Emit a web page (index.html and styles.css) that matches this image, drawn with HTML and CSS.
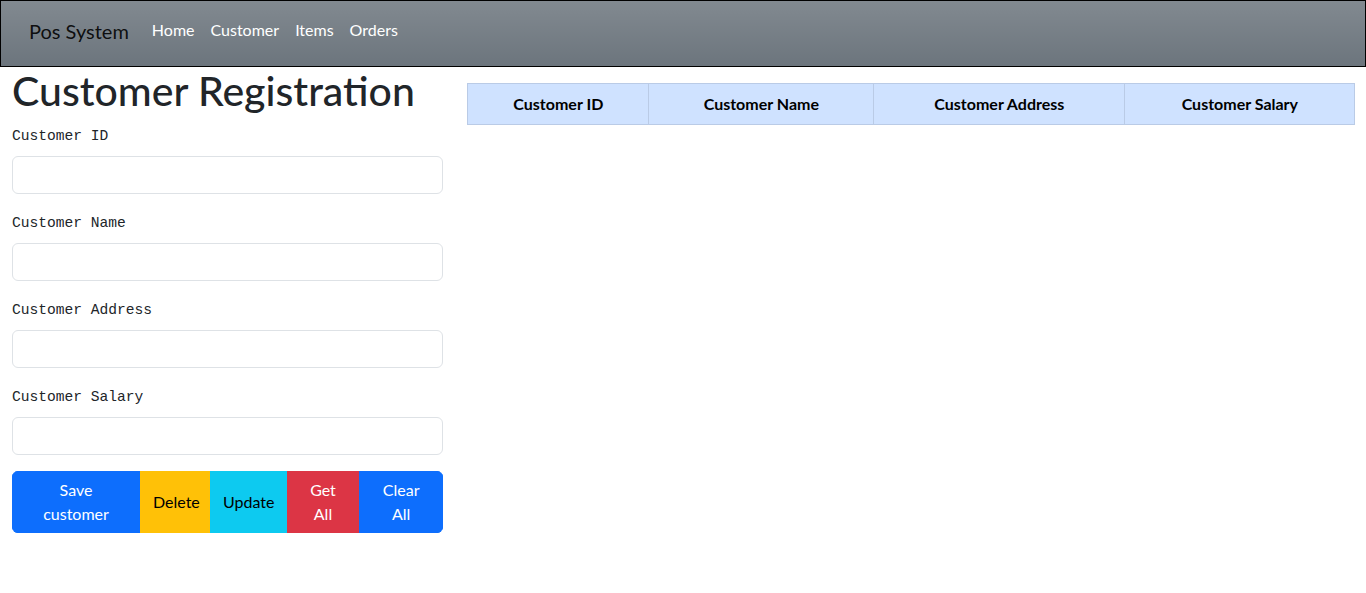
FILE: index.html
```html
<!DOCTYPE html>
<html lang="en">
<head>
<meta charset="utf-8">
<title>Pos System</title>
<link rel="stylesheet" href="styles.css">
</head>
<body>
<nav class="navbar">
  <span class="brand">Pos System</span>
  <ul class="nav-links">
    <li><a href="#">Home</a></li>
    <li><a href="#">Customer</a></li>
    <li><a href="#">Items</a></li>
    <li><a href="#">Orders</a></li>
  </ul>
</nav>
<main class="page">
  <section class="form-col">
    <h1 class="title">Customer Registration</h1>
    <div class="field">
      <label class="label" for="cid">Customer ID</label>
      <input class="input" id="cid" type="text">
    </div>
    <div class="field">
      <label class="label" for="cname">Customer Name</label>
      <input class="input" id="cname" type="text">
    </div>
    <div class="field">
      <label class="label" for="caddr">Customer Address</label>
      <input class="input" id="caddr" type="text">
    </div>
    <div class="field">
      <label class="label" for="csal">Customer Salary</label>
      <input class="input" id="csal" type="text">
    </div>
    <div class="btn-group">
      <button class="btn btn-save">Save<br>customer</button>
      <button class="btn btn-delete">Delete</button>
      <button class="btn btn-update">Update</button>
      <button class="btn btn-getall">Get<br>All</button>
      <button class="btn btn-clear">Clear<br>All</button>
    </div>
  </section>
  <section class="table-col">
    <table class="data-table">
      <thead>
        <tr>
          <th class="c-id">Customer ID</th>
          <th class="c-name">Customer Name</th>
          <th class="c-addr">Customer Address</th>
          <th class="c-sal">Customer Salary</th>
        </tr>
      </thead>
      <tbody></tbody>
    </table>
  </section>
</main>
</body>
</html>
```
FILE: styles.css
```css
* { box-sizing: border-box; }
html, body { margin: 0; padding: 0; }
body {
  font-family: Lato, "Noto Sans", sans-serif;
  font-size: 16px;
  line-height: 1.5;
  color: #212529;
  background: #fff;
}
.navbar {
  display: flex;
  align-items: flex-start;
  height: 67px;
  padding: 15px 0 0 28px;
  border: 1px solid #000;
  background-color: #6c757d;
  background-image: linear-gradient(180deg, rgba(255,255,255,.15), rgba(255,255,255,0));
}
.brand {
  font-size: 20px;
  line-height: 30px;
  color: rgba(0,0,0,.9);
  margin-right: 16px;
}
.nav-links {
  display: flex;
  list-style: none;
  margin: 2px 0 0 -1px;
  padding: 0;
}
.nav-links a {
  display: block;
  padding: 0 8px;
  color: #fff;
  text-decoration: none;
  line-height: 24px;
}
.page {
  display: flex;
}
.form-col {
  flex: 0 0 33.3333%;
  padding: 0 12px;
}
.table-col {
  flex: 0 0 66.6667%;
  padding: 0 12px;
}
.title {
  font-size: 41px;
  font-weight: 500;
  line-height: 48px;
  margin: 0 0 8px;
}
.field { margin-bottom: 16px; }
.label {
  display: block;
  font-family: "Liberation Mono", "DejaVu Sans Mono", monospace;
  font-size: 14.6px;
  line-height: 23px;
  padding-top: 2px;
  margin-bottom: 8px;
}
.input {
  display: block;
  width: 100%;
  height: 38px;
  border: 1px solid #dee2e6;
  border-radius: 6px;
  padding: 6px 12px;
  font: inherit;
  background: #fff;
}
.btn-group {
  display: flex;
  width: 100%;
  border-radius: 6px;
  overflow: hidden;
}
.btn {
  font: inherit;
  line-height: 24px;
  border: 1px solid transparent;
  padding: 6px 12px;
  text-align: center;
  color: #fff;
  flex: 0 0 auto;
}
.btn-save { width: 128px; background: #0d6efd; border-color: #0d6efd; }
.btn-delete { width: 70px; background: #ffc107; border-color: #ffc107; color: #000; }
.btn-update { width: 77px; background: #0dcaf0; border-color: #0dcaf0; color: #000; }
.btn-getall { width: 72px; background: #dc3545; border-color: #dc3545; }
.btn-clear { flex: 1 1 auto; background: #0d6efd; border-color: #0d6efd; }
.data-table {
  width: 100%;
  margin-top: 16px;
  border-collapse: collapse;
  table-layout: fixed;
}
.data-table th {
  background: #cfe2ff;
  border: 1px solid #bacbe6;
  padding: 8px;
  line-height: 24px;
  font-weight: 700;
  color: #000;
  text-align: center;
}
.c-id { width: 181px; }
.c-name { width: 225px; }
.c-addr { width: 251px; }
.c-sal { width: 230px; }
```
